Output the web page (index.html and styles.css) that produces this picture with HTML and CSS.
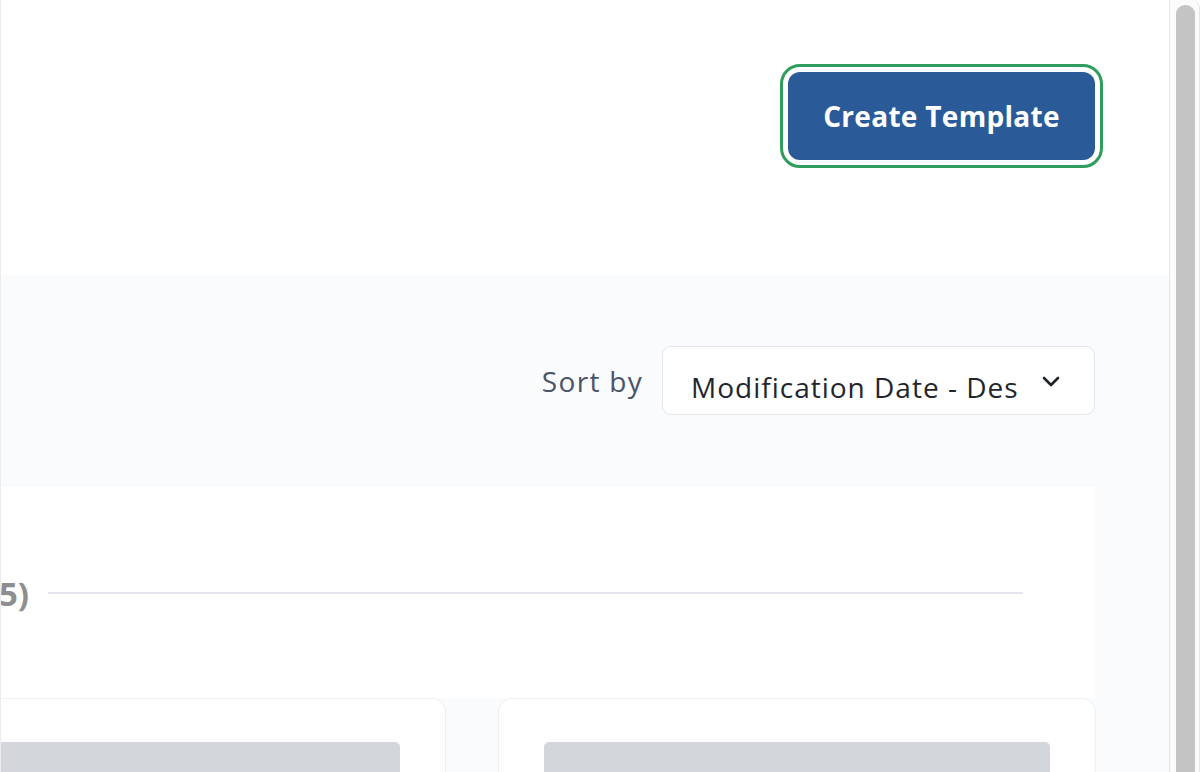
FILE: index.html
```html
<!DOCTYPE html>
<html lang="en">

<head>
    <meta charset="UTF-8">
    <title>Templates</title>
    <link rel="stylesheet" href="styles.css">
</head>

<body>
    <div class="page">
        <div class="main">
            <div class="top-bar">
                <button class="create-btn">Create Template</button>
            </div>

            <div class="content">
                <div class="sort-row">
                    <span class="sort-label">Sort by</span>
                    <div class="sort-select">
                        <span>Modification Date - Des</span>
                        <svg class="chevron" width="18" height="12" viewBox="0 0 18 12">
                            <path d="M2 2 L9 9 L16 2" fill="none" stroke="#1f2329" stroke-width="2.6" stroke-linecap="round" stroke-linejoin="round"/>
                        </svg>
                    </div>
                </div>

                <div class="panel">
                    <div class="section-head">
                        <span class="section-title">Templates (5)</span>
                        <div class="section-line"></div>
                    </div>

                    <div class="card-row">
                        <div class="card">
                            <div class="card-thumb"></div>
                        </div>
                        <div class="card">
                            <div class="card-thumb"></div>
                        </div>
                    </div>
                </div>
            </div>
        </div>

        <div class="scrollbar">
            <div class="thumb"></div>
        </div>
    </div>
</body>

</html>
```

FILE: styles.css
```css
html,
body {
    margin: 0;
    height: 100%;
    overflow: hidden;
}

body {
    font-family: "Open Sans", Lato, sans-serif;
    background-color: #fff;
}

.page {
    display: flex;
    height: 772px;
    border-left: 1px solid #ececec;
}

.main {
    flex: 1;
    display: flex;
    flex-direction: column;
    overflow: hidden;
}

.top-bar {
    height: 275px;
    flex-shrink: 0;
    display: flex;
    justify-content: flex-end;
    align-items: flex-start;
    padding: 72px 74px 0 0;
    box-sizing: border-box;
    background-color: #fff;
}

.create-btn {
    width: 307px;
    height: 88px;
    background-color: #2a5a98;
    color: #fff;
    border: none;
    border-radius: 12px;
    font-family: "Open Sans", sans-serif;
    font-weight: 700;
    font-size: 28px;
    letter-spacing: 0.3px;
    outline: 3px solid #2f9d5c;
    outline-offset: 5px;
    cursor: pointer;
}

.content {
    flex: 1;
    background-color: #fafbfd;
    padding: 71px 74px 0 0;
    display: flex;
    flex-direction: column;
}

.sort-row {
    display: flex;
    justify-content: flex-end;
    align-items: center;
    gap: 19px;
}

.sort-label {
    font-size: 28px;
    color: #4a5466;
    letter-spacing: 1.3px;
}

.sort-select {
    width: 433px;
    height: 69px;
    box-sizing: border-box;
    background-color: #fff;
    border: 1.5px solid #e2e5ea;
    border-radius: 9px;
    display: flex;
    align-items: center;
    justify-content: space-between;
    padding: 12px 34px 0 28px;
    font-size: 28px;
    letter-spacing: 1px;
    color: #22262c;
}

.chevron {
    margin-top: -9px;
}

.panel {
    margin-top: 72px;
    flex: 1;
    background-color: #fff;
    display: flex;
    flex-direction: column;
}

.section-head {
    display: flex;
    align-items: center;
    gap: 19px;
    height: 36px;
    margin-top: 88px;
    padding-right: 72px;
}

.section-title {
    margin-left: -194px;
    font-size: 33px;
    font-weight: 700;
    color: #8e8e8e;
    white-space: nowrap;
}

.section-line {
    flex: 1;
    height: 2px;
    background-color: #e4e6f1;
}

.card-row {
    margin-top: 87px;
    margin-left: -153px;
    flex: 1;
    display: flex;
    gap: 52px;
    background-color: #fafbfd;
}

.card {
    width: 598px;
    flex-shrink: 0;
    box-sizing: border-box;
    background-color: #fff;
    border: 1.5px solid #eef0f3;
    border-bottom: none;
    border-radius: 14px 14px 0 0;
    padding: 43px 45px 0 45px;
}

.card-thumb {
    height: 60px;
    background-color: #d3d6da;
    border-radius: 5px 5px 0 0;
}

.scrollbar {
    width: 31px;
    box-sizing: border-box;
    border-left: 1.5px solid #e6e6e6;
    border-right: 1.5px solid #e6e6e6;
    border-radius: 0 8px 0 0;
    background-color: #fbfbfb;
    padding: 5px 4px 0 6px;
}

.thumb {
    height: 100%;
    background-color: #c4c4c4;
    border-radius: 9px 9px 0 0;
}
```
